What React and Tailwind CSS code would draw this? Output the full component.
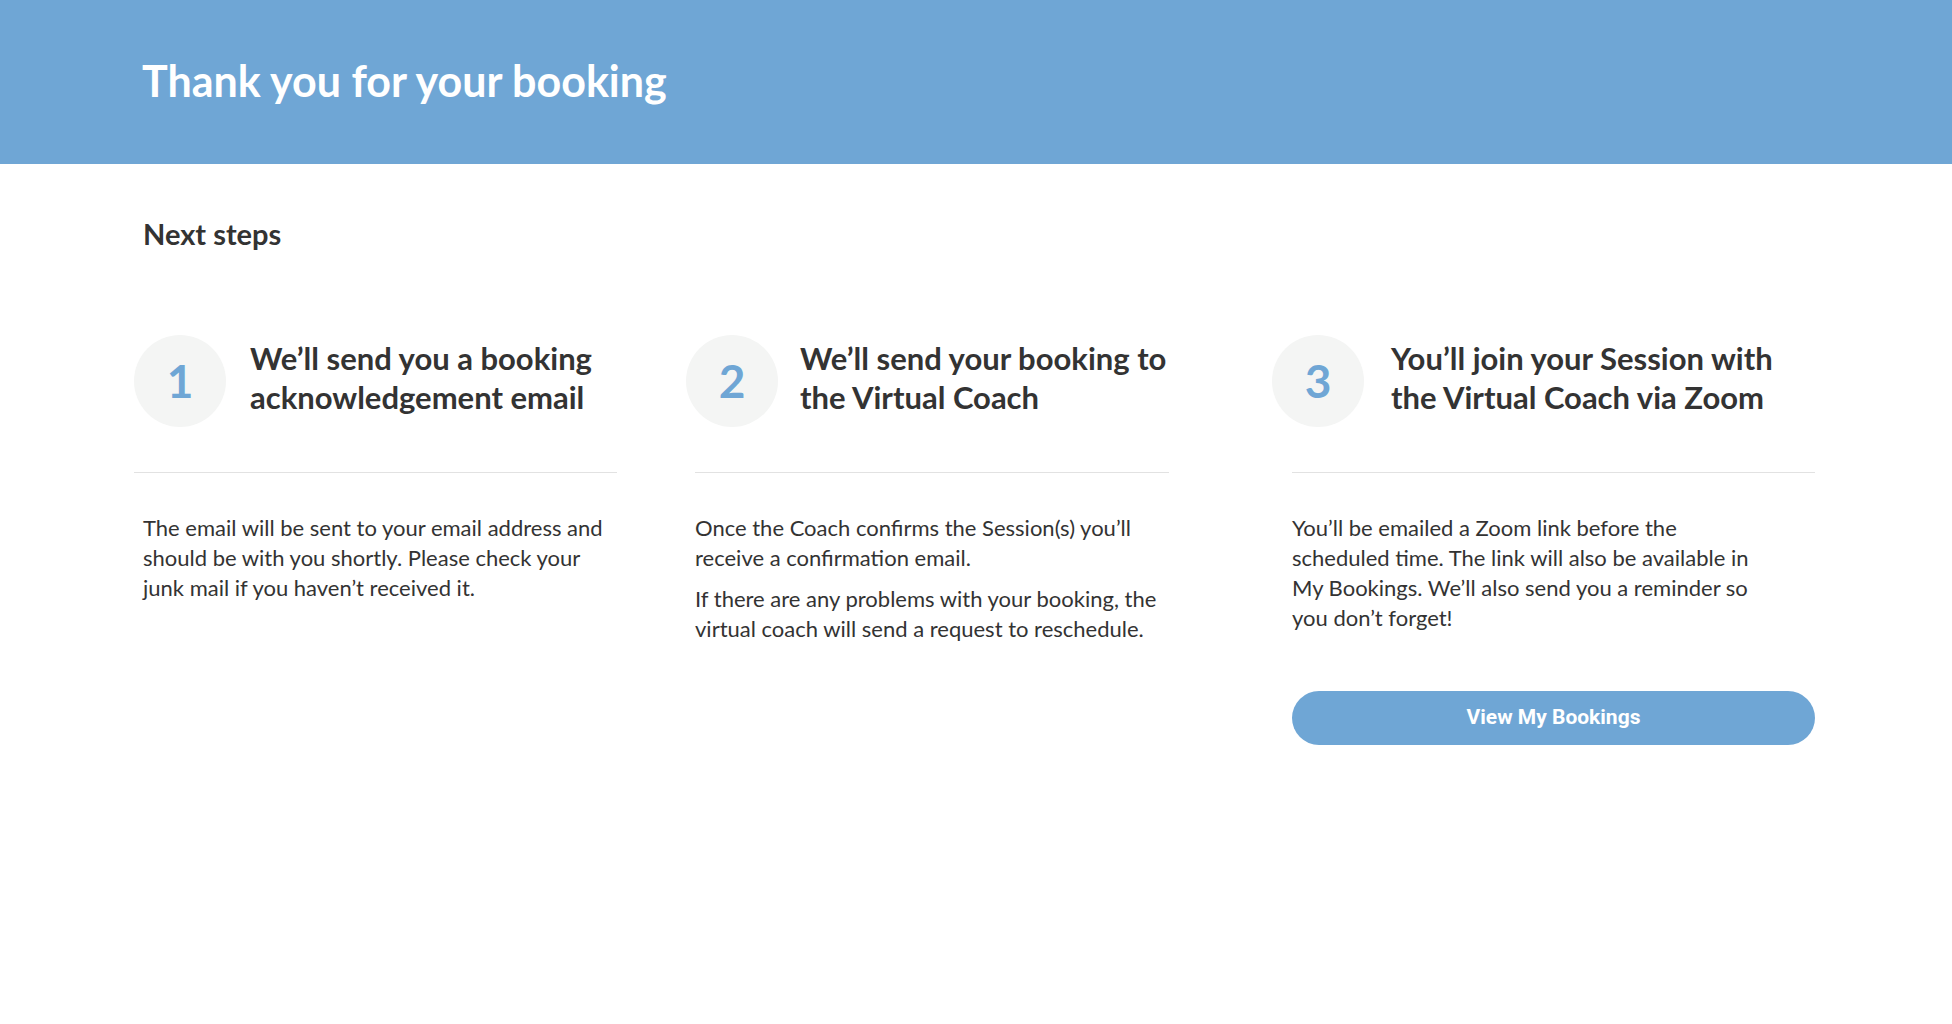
import React from 'react';

const steps = [
    {
        num: '1',
        title: ['We’ll send you a booking', 'acknowledgement email'],
        body: ['The email will be sent to your email address and should be with you shortly. Please check your junk mail if you haven’t received it.'],
    },
    {
        num: '2',
        title: ['We’ll send your booking to', 'the Virtual Coach'],
        body: [
            'Once the Coach confirms the Session(s) you’ll receive a confirmation email.',
            'If there are any problems with your booking, the virtual coach will send a request to reschedule.',
        ],
    },
    {
        num: '3',
        title: ['You’ll join your Session with', 'the Virtual Coach via Zoom'],
        body: ['You’ll be emailed a Zoom link before the scheduled time. The link will also be available in My Bookings. We’ll also send you a reminder so you don’t forget!'],
    },
];

const StepHeader = ({ step, gap }) => (
    <div className="flex items-center">
        <div className="w-[92px] h-[92px] rounded-full bg-[#f4f5f4] flex items-center justify-center shrink-0">
            <span className="text-[46px] font-bold text-[#6fa6d5] leading-none">{step.num}</span>
        </div>
        <h3 className={`${gap} mb-[5px] text-[31px] font-bold leading-[39px] text-[#333333]`}>
            {step.title[0]}<br />{step.title[1]}
        </h3>
    </div>
);

export default function App() {
    return (
        <div className="min-h-screen bg-white" style={{ fontFamily: 'Lato, "Open Sans", sans-serif' }}>
            {/* top banner */}
            <div className="h-[164px] bg-[#6fa6d5] flex items-center pl-[142px]">
                <h1 className="mb-[2px] text-[43px] font-bold text-white">Thank you for your booking</h1>
            </div>

            <div className="pl-[134px] pt-[48px]">
                <h2 className="pl-[9px] text-[29px] font-bold text-[#333333]">Next steps</h2>

                <div className="flex mt-[79px]">
                    {/* step 1 */}
                    <div className="w-[552px]">
                        <StepHeader step={steps[0]} gap="ml-[24px]" />
                        <div className="mt-[45px] w-[483px] h-px bg-[#e2e2e2]"></div>
                        <div className="mt-[40px] pl-[9px] w-[480px] text-[22px] leading-[30px] text-[#333333]">
                            <p>{steps[0].body[0]}</p>
                        </div>
                    </div>

                    {/* step 2 */}
                    <div className="w-[586px]">
                        <StepHeader step={steps[1]} gap="ml-[22px]" />
                        <div className="mt-[45px] ml-[9px] w-[474px] h-px bg-[#e2e2e2]"></div>
                        <div className="mt-[40px] pl-[9px] w-[484px] text-[22px] leading-[30px] text-[#333333] flex flex-col gap-[11px]">
                            {steps[1].body.map((p, i) => (
                                <p key={i}>{p}</p>
                            ))}
                        </div>
                    </div>

                    {/* step 3 */}
                    <div className="flex-1">
                        <StepHeader step={steps[2]} gap="ml-[27px]" />
                        <div className="mt-[45px] ml-[20px] w-[523px] h-px bg-[#e2e2e2]"></div>
                        <div className="mt-[40px] pl-[20px] w-[490px] text-[22px] leading-[30px] text-[#333333]">
                            <p>{steps[2].body[0]}</p>
                        </div>
                        <button
                            className="mt-[58px] ml-[20px] w-[523px] h-[54px] rounded-full bg-[#6fa6d5] text-white text-[21px] font-bold"
                            style={{ fontFamily: 'Roboto, sans-serif' }}
                        >
                            View My Bookings
                        </button>
                    </div>
                </div>
            </div>
        </div>
    );
}
